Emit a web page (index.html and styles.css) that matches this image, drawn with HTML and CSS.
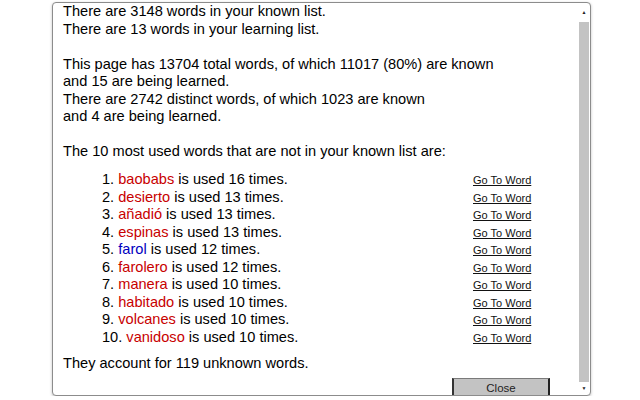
FILE: index.html
```html
<!DOCTYPE html>
<html lang="en">
<head>
    <meta charset="UTF-8">
    <title>Word statistics</title>
    <link rel="stylesheet" href="styles.css">
</head>
<body>
    <div class="dialog">
        <div class="content">
            <p>There are 3148 words in your known list.<br>
            There are 13 words in your learning list.</p>

            <p>This page has 13704 total words, of which 11017 (80%) are known<br>
            and 15 are being learned.<br>
            There are 2742 distinct words, of which 1023 are known<br>
            and 4 are being learned.</p>

            <p>The 10 most used words that are not in your known list are:</p>

            <div class="word-list">
                <div class="word-row"><span>1. <span class="unknown">baobabs</span> is used 16 times.</span><a href="#">Go To Word</a></div>
                <div class="word-row"><span>2. <span class="unknown">desierto</span> is used 13 times.</span><a href="#">Go To Word</a></div>
                <div class="word-row"><span>3. <span class="unknown">añadió</span> is used 13 times.</span><a href="#">Go To Word</a></div>
                <div class="word-row"><span>4. <span class="unknown">espinas</span> is used 13 times.</span><a href="#">Go To Word</a></div>
                <div class="word-row"><span>5. <span class="learning">farol</span> is used 12 times.</span><a href="#">Go To Word</a></div>
                <div class="word-row"><span>6. <span class="unknown">farolero</span> is used 12 times.</span><a href="#">Go To Word</a></div>
                <div class="word-row"><span>7. <span class="unknown">manera</span> is used 10 times.</span><a href="#">Go To Word</a></div>
                <div class="word-row"><span>8. <span class="unknown">habitado</span> is used 10 times.</span><a href="#">Go To Word</a></div>
                <div class="word-row"><span>9. <span class="unknown">volcanes</span> is used 10 times.</span><a href="#">Go To Word</a></div>
                <div class="word-row"><span>10. <span class="unknown">vanidoso</span> is used 10 times.</span><a href="#">Go To Word</a></div>
            </div>

            <p>They account for 119 unknown words.</p>

            <div class="footer">
                <button class="close-btn">Close</button>
            </div>
        </div>
        <div class="scrollbar">
            <div class="arrow arrow-up">&#9650;</div>
            <div class="thumb"></div>
            <div class="arrow arrow-down">&#9660;</div>
        </div>
    </div>
</body>
</html>
```

FILE: styles.css
```css
body {
    margin: 0;
    background-color: #fff;
    font-family: "Liberation Sans", Arial, sans-serif;
}
.dialog {
    display: flex;
    width: 537px;
    height: 392px;
    margin: 2px 0 0 52px;
    border: 1px solid #8c8c8c;
    border-radius: 4px;
    box-shadow: 0 1px 3px rgba(0,0,0,0.25);
    background-color: #fff;
    overflow: hidden;
}
.content {
    flex: 1;
    padding: 0 0 0 10px;
    overflow: hidden;
    font-size: 14.6px;
    line-height: 17.5px;
    color: #000;
}
.content p {
    margin: 0 0 17.5px 0;
}
.word-list {
    margin: -8px 0 10px 39px;
}
.word-row {
    display: grid;
    grid-template-columns: 371px auto;
    align-items: center;
    height: 17.56px;
}
.word-row a {
    font-size: 11px;
    color: #111;
    text-decoration: underline;
    padding-top: 2px;
}
.unknown {
    color: #c80000;
}
.learning {
    color: #0000c0;
}
.content p:last-of-type {
    margin-bottom: 5px;
}
.footer {
    display: flex;
    justify-content: flex-end;
    padding-right: 26px;
}
.close-btn {
    width: 98px;
    height: 20px;
    padding: 0;
    background-color: #c3c3c3;
    border: 1px solid #7a7a7a;
    border-left: 2px solid #333;
    border-right: 2px solid #222;
    border-bottom: none;
    font-family: "Liberation Sans", Arial, sans-serif;
    font-size: 11.5px;
    color: #222;
}
.scrollbar {
    width: 13px;
    display: flex;
    flex-direction: column;
    align-items: flex-end;
    padding-right: 1px;
}
.arrow {
    width: 10px;
    font-size: 5px;
    text-align: center;
    color: #222;
}
.arrow-up {
    height: 19px;
    line-height: 19px;
}
.arrow-down {
    height: 13px;
    line-height: 13px;
}
.thumb {
    flex: 1;
    width: 10px;
    background-color: #c3c3c3;
}
```
